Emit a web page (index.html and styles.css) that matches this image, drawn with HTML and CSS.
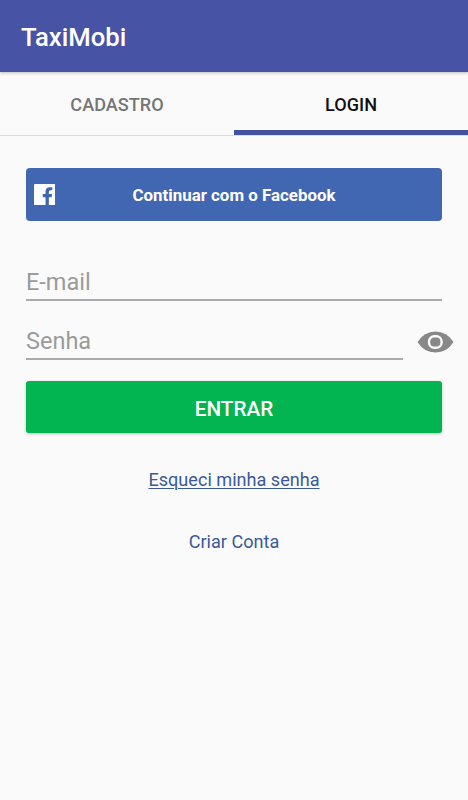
FILE: index.html
```html
<!DOCTYPE html>
<html lang="pt-BR">
<head>
<title>TaxiMobi</title>
<meta charset="UTF-8">
<meta name="viewport" content="width=device-width, initial-scale=1">
<meta name="theme-color" content="#4754a6">
<link rel="stylesheet" href="styles.css">
</head>
<body>
<header class="appbar">
 <h1>TaxiMobi</h1>
</header>

<nav class="tabs">
 <a class="tab" href="#cadastro">CADASTRO</a>
 <a class="tab active" href="#login">LOGIN</a>
</nav>

<form class="login">
 <button type="button" class="facebook">
  <svg class="fb-icon" viewBox="0 0 22 22" width="21.5" height="21.5">
   <path fill="#fff" d="M1.4 0H20.6Q22 0 22 1.4V20.6Q22 22 20.6 22H15.2V13.5H18L18.5 10.2H15.2V8Q15.2 6.4 16.9 6.4H18.7V3.4Q17.6 3.2 16.3 3.2Q11.8 3.2 11.8 7.7V10.2H9V13.5H11.8V22H1.4Q0 22 0 20.6V1.4Q0 0 1.4 0Z"/>
  </svg>
  <span>Continuar com o Facebook</span>
 </button>

 <input class="field email" type="email" placeholder="E-mail" aria-label="E-mail">

 <div class="password-row">
  <input class="field" type="password" placeholder="Senha" aria-label="Senha">
  <svg class="eye" viewBox="0 0 37 22" width="37" height="22">
   <path fill="#888" d="M0.5 11Q7 .5 18.5 .5T36.5 11Q30 21.5 18.5 21.5T.5 11Z"/>
   <rect x="12" y="5.3" width="12.6" height="11.4" rx="5.2" fill="#888" stroke="#fafafa" stroke-width="2.4"/>
  </svg>
 </div>

 <button type="button" class="enter">ENTRAR</button>

 <a class="link forgot" href="#senha">Esqueci minha senha</a>
 <a class="link" href="#conta">Criar Conta</a>
</form>
</body>
</html>
```

FILE: styles.css
```css
* { box-sizing: border-box; }
body { margin: 0; min-height: 100vh; background: #fafafa;
       font-family: Roboto, sans-serif; }
a { text-decoration: none; }
button { border: 0; padding: 0; font-family: inherit; color: #fff; }

.appbar { position: relative; display: flex; align-items: center;
          height: 72px; padding: 2px 21px 0; background: #4754a6;
          box-shadow: 0 1px 3px rgba(0,0,0,0.25); }
.appbar h1 { margin: 0; font-size: 25.7px; font-weight: 500; color: #fff; }

.tabs { display: flex; height: 64px; border-bottom: 1px solid #dcdcdc; }
.tab { flex: 1; height: 63px; padding-top: 5px; line-height: 55px;
       text-align: center; font-size: 18.1px; font-weight: 500;
       color: #757575; }
.tab.active { color: #111; border-bottom: 5px solid #4452a2; }

.login { display: flex; flex-direction: column; padding: 31.5px 26px 0; }

.facebook { display: flex; align-items: center; height: 53.5px;
            padding: 0 7.5px; border-radius: 4px; background: #4267b2;
            font-size: 16.9px; font-weight: 700; }
.facebook span { flex: 1; padding-top: 1px; text-align: center; }
.fb-icon { flex: none; margin-right: -21.5px; }

.field { width: 100%; height: 40px; padding: 4px 0 0; border: 0;
         border-bottom: 2px solid #aaa; border-radius: 0;
         background: none; outline: none;
         font: 23.5px Roboto, sans-serif; color: #222; }
.field::placeholder { color: #9b9b9b; opacity: 1; }
.email { margin-top: 40px; }

.password-row { display: flex; align-items: center; gap: 14px;
                margin: 19px -12px 0 0; }
.password-row .field { flex: 1; min-width: 0; }
.eye { flex: none; margin-top: 4px; }

.enter { height: 52px; margin-top: 21px; padding-top: 4px;
         border-radius: 3px; background: #02b551;
         box-shadow: 0 1px 3px rgba(0,0,0,0.25);
         font-size: 20.7px; font-weight: 500; }

.link { align-self: center; margin-top: 38px; line-height: 24px;
        font-size: 18.1px; color: #3b5998; }
.forgot { margin-top: 35px; text-decoration: underline;
          text-decoration-thickness: 1px; text-underline-offset: 2px; }
```
